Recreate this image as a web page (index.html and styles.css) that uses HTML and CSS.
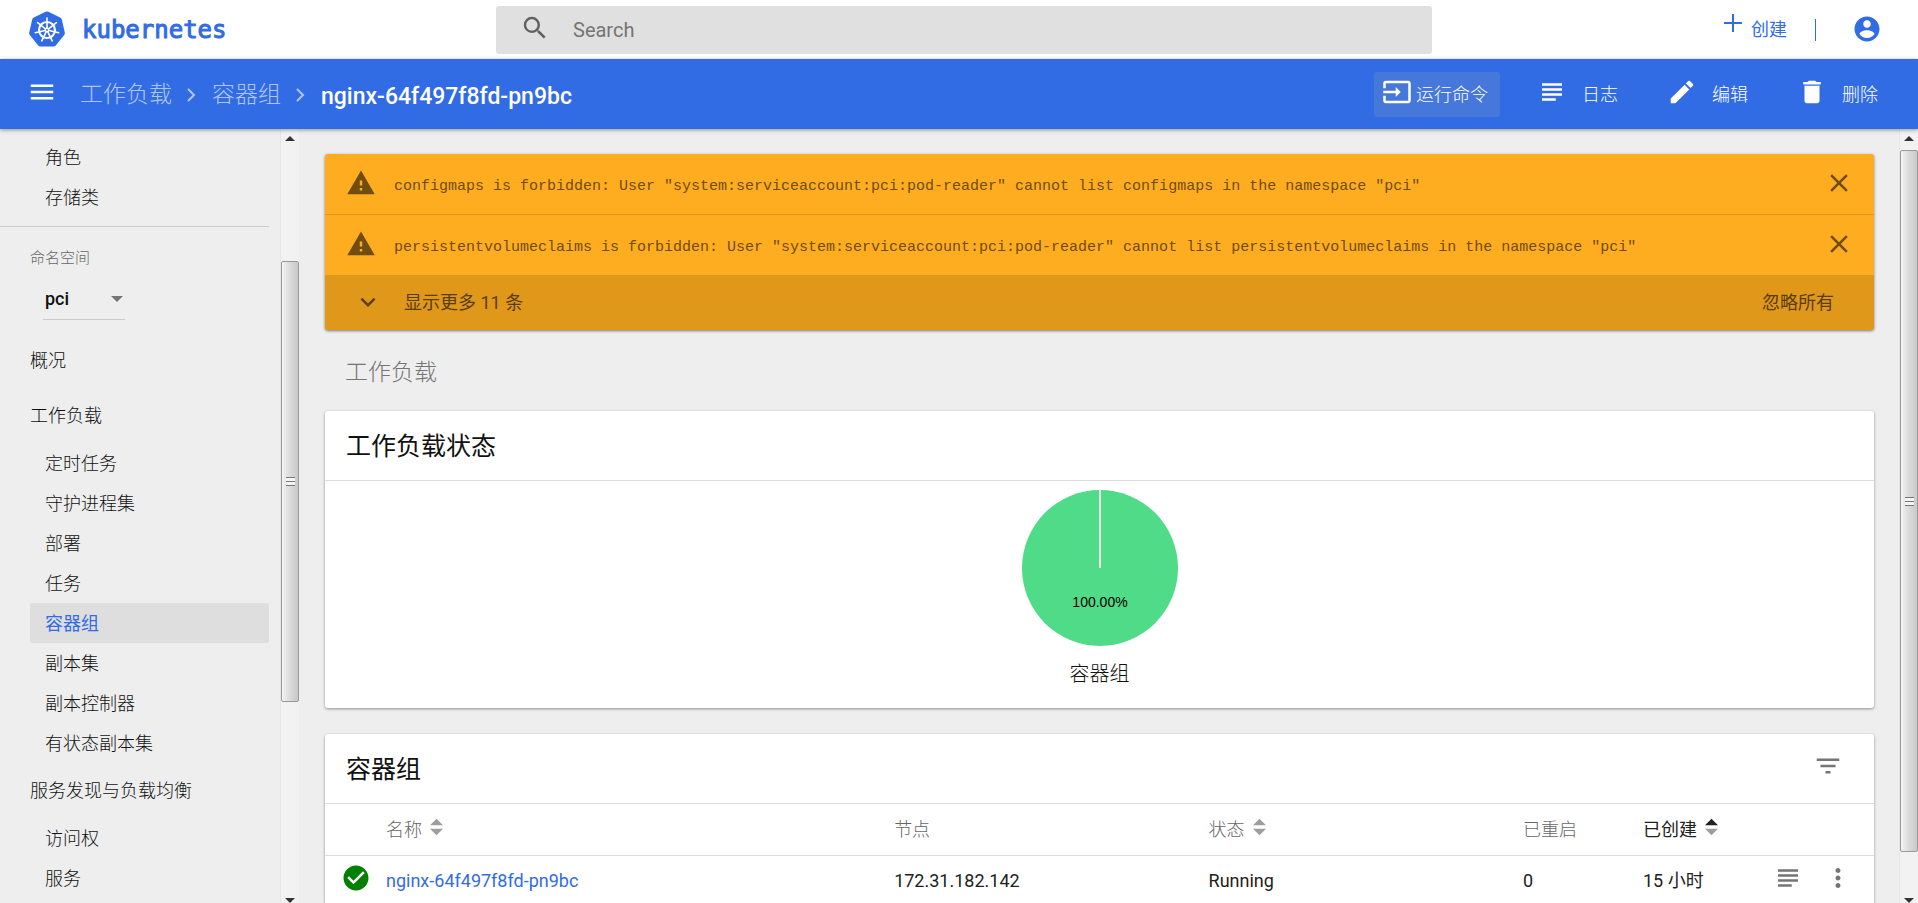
FILE: index.html
```html
<!DOCTYPE html>
<html lang="zh-CN">
<head>
<meta charset="utf-8">
<title>nginx-64f497f8fd-pn9bc - Kubernetes Dashboard</title>
<link rel="stylesheet" href="styles.css">
</head>
<body>
<header class="topbar">
  <a class="brand" href="#">
    <svg class="brand-logo" viewBox="0 0 38 38" aria-hidden="true">
      <path fill="#326ce5" d="M17.6 .8Q19 .1 20.4 .8L32.2 6.4Q33.4 7 33.8 8.400L36.800 21.400Q37.100 22.800 36.200 23.900L28 34.300Q27 35.500 25.500 35.500L12.500 35.500Q11 35.500 10 34.300L1.800 23.900Q.9 22.800 1.200 21.400L4.200 8.400Q4.600 7 5.800 6.400Z"/>
      <g fill="none" stroke="#fff">
        <circle cx="19" cy="19" r="8" stroke-width="2.200"/>
        <g stroke-width="1.600" stroke-linecap="round">
          <path d="M19 17V7"/>
          <path d="M19 17V7" transform="rotate(51.430 19 19)"/>
          <path d="M19 17V7" transform="rotate(102.860 19 19)"/>
          <path d="M19 17V7" transform="rotate(154.290 19 19)"/>
          <path d="M19 17V7" transform="rotate(205.710 19 19)"/>
          <path d="M19 17V7" transform="rotate(257.140 19 19)"/>
          <path d="M19 17V7" transform="rotate(308.570 19 19)"/>
        </g>
      </g>
      <circle cx="19" cy="19" r="2.400" fill="#fff"/>
      <circle cx="19" cy="19" r=".9" fill="#326ce5"/>
    </svg>
    <span>kubernetes</span>
  </a>
  <form class="search" role="search">
    <svg class="icon" viewBox="0 0 24 24" aria-hidden="true"><path d="M15.500 14h-.79l-.28-.27A6.470 6.470 0 0 0 16 9.500 6.500 6.500 0 1 0 9.500 16c1.610 0 3.090-.59 4.230-1.570l.27.28v.79l5 4.990L20.490 19l-4.990-5zm-6 0C7.010 14 5 11.990 5 9.500S7.010 5 9.500 5 14 7.010 14 9.500 11.990 14 9.500 14z"/></svg>
    <input class="search-input" type="text" placeholder="Search" aria-label="Search">
  </form>
  <div class="top-actions">
    <button class="create" type="button">
      <svg class="create-icon" viewBox="0 0 20 20" aria-hidden="true"><path d="M10 1v18M1 10h18" stroke="currentColor" stroke-width="2"/></svg>
      <span>创建</span>
    </button>
    <span class="bar"></span>
    <button class="account" type="button" aria-label="帐户">
      <svg class="icon" viewBox="0 0 24 24" aria-hidden="true"><path d="M12 2C6.480 2 2 6.480 2 12s4.480 10 10 10 10-4.480 10-10S17.520 2 12 2zm0 3c1.660 0 3 1.340 3 3s-1.340 3-3 3-3-1.340-3-3 1.340-3 3-3zm0 14.200a7.200 7.200 0 0 1-6-3.220c.03-1.990 4-3.080 6-3.080 1.990 0 5.970 1.090 6 3.080a7.200 7.200 0 0 1-6 3.220z"/></svg>
    </button>
  </div>
</header>

<div class="toolbar">
  <button class="menu" type="button" aria-label="菜单">
    <svg class="icon" viewBox="0 0 24 24" aria-hidden="true"><path d="M3 18h18v-2H3v2zm0-5h18v-2H3v2zm0-7v2h18V6H3z"/></svg>
  </button>
  <nav class="crumbs" aria-label="路径">
    <a href="#">工作负载</a>
    <svg class="crumb-arrow" viewBox="0 0 12 18" aria-hidden="true"><path d="M2 3l6 6-6 6"/></svg>
    <a href="#">容器组</a>
    <svg class="crumb-arrow" viewBox="0 0 12 18" aria-hidden="true"><path d="M2 3l6 6-6 6"/></svg>
    <span class="crumb-current">nginx-64f497f8fd-pn9bc</span>
  </nav>
  <div class="tools">
    <button class="tool tool-active" type="button">
      <svg class="icon" viewBox="0 0 24 24" aria-hidden="true"><path d="M21 3.010H3c-1.100 0-2 .9-2 2V9h2V4.990h18v14.030H3V15H1v4.010c0 1.100.9 1.980 2 1.980h18c1.100 0 2-.88 2-1.980v-14c0-1.110-.9-2-2-2zM11 16l4-4-4-4v3H1v2h10v3z"/></svg>
      <span>运行命令</span>
    </button>
    <button class="tool" type="button">
      <svg class="icon" viewBox="0 0 24 24" aria-hidden="true"><path d="M15 17H4v2h11v-2zm5-8H4v2h16V9zM4 15h16v-2H4v2zM4 5v2h16V5H4z"/></svg>
      <span>日志</span>
    </button>
    <button class="tool" type="button">
      <svg class="icon" viewBox="0 0 24 24" aria-hidden="true"><path d="M3 17.250V21h3.750L17.810 9.940l-3.750-3.750L3 17.250zM20.710 7.040a1 1 0 0 0 0-1.410l-2.340-2.340a1 1 0 0 0-1.410 0l-1.830 1.830 3.750 3.750 1.830-1.830z"/></svg>
      <span>编辑</span>
    </button>
    <button class="tool" type="button">
      <svg class="icon" viewBox="0 0 24 24" aria-hidden="true"><path d="M6 19c0 1.100.9 2 2 2h8c1.100 0 2-.9 2-2V7H6v12zM19 4h-3.500l-1-1h-5l-1 1H5v2h14V4z"/></svg>
      <span>删除</span>
    </button>
  </div>
</div>

<div class="shell">
  <nav class="sidebar" aria-label="导航">
    <a class="nav-item" href="#">角色</a>
    <a class="nav-item" href="#">存储类</a>
    <hr class="nav-rule">
    <label class="ns-label" for="ns">命名空间</label>
    <div class="ns-box">
      <select class="ns-select" id="ns"><option>pci</option></select>
      <svg class="ns-arrow" viewBox="0 0 12 6" aria-hidden="true"><path d="M0 0h12L6 6z"/></svg>
    </div>
    <a class="nav-group" href="#">概况</a>
    <a class="nav-group" href="#">工作负载</a>
    <a class="nav-item" href="#">定时任务</a>
    <a class="nav-item" href="#">守护进程集</a>
    <a class="nav-item" href="#">部署</a>
    <a class="nav-item" href="#">任务</a>
    <a class="nav-item nav-selected" href="#" aria-current="page">容器组</a>
    <a class="nav-item" href="#">副本集</a>
    <a class="nav-item" href="#">副本控制器</a>
    <a class="nav-item" href="#">有状态副本集</a>
    <a class="nav-group" href="#">服务发现与负载均衡</a>
    <a class="nav-item" href="#">访问权</a>
    <a class="nav-item" href="#">服务</a>
  </nav>
  <div class="scroll scroll-side" aria-hidden="true">
    <svg class="scroll-cap" viewBox="0 0 10 6"><path d="M0 5l5-5 5 5z"/></svg>
    <div class="scroll-before"></div>
    <div class="scroll-thumb"><i class="grip"></i></div>
    <div class="scroll-after"></div>
    <svg class="scroll-cap scroll-cap-end" viewBox="0 0 10 6"><path d="M0 1l5 5 5-5z"/></svg>
  </div>

  <main class="content">
    <section class="alerts" aria-label="警告">
      <div class="alert">
        <svg class="icon" viewBox="0 0 24 24" aria-hidden="true"><path d="M1 21h22L12 2 1 21zm12-3h-2v-2h2v2zm0-4h-2v-4h2v4z"/></svg>
        <p class="alert-text">configmaps is forbidden: User "system:serviceaccount:pci:pod-reader" cannot list configmaps in the namespace "pci"</p>
        <button class="close" type="button" aria-label="关闭"><svg class="icon" viewBox="0 0 24 24" aria-hidden="true"><path d="M19 6.410L17.590 5 12 10.590 6.410 5 5 6.410 10.590 12 5 17.590 6.410 19 12 13.410 17.590 19 19 17.590 13.410 12z"/></svg></button>
      </div>
      <div class="alert">
        <svg class="icon" viewBox="0 0 24 24" aria-hidden="true"><path d="M1 21h22L12 2 1 21zm12-3h-2v-2h2v2zm0-4h-2v-4h2v4z"/></svg>
        <p class="alert-text">persistentvolumeclaims is forbidden: User "system:serviceaccount:pci:pod-reader" cannot list persistentvolumeclaims in the namespace "pci"</p>
        <button class="close" type="button" aria-label="关闭"><svg class="icon" viewBox="0 0 24 24" aria-hidden="true"><path d="M19 6.410L17.590 5 12 10.590 6.410 5 5 6.410 10.590 12 5 17.590 6.410 19 12 13.410 17.590 19 19 17.590 13.410 12z"/></svg></button>
      </div>
      <div class="alert-foot">
        <button class="more" type="button">
          <svg class="icon" viewBox="0 0 24 24" aria-hidden="true"><path d="M7.410 7.840L12 12.420l4.590-4.580L18 9.250l-6 6-6-6z"/></svg>
          <span>显示更多 11 条</span>
        </button>
        <button class="dismiss" type="button">忽略所有</button>
      </div>
    </section>

    <h1 class="page-title">工作负载</h1>

    <section class="card">
      <div class="card-head"><h2 class="card-title">工作负载状态</h2></div>
      <figure class="chart">
        <svg class="pie" viewBox="0 0 160 160" role="img" aria-label="容器组 100.00%">
          <circle cx="80" cy="80" r="78" fill="#4fdb87"/>
          <path d="M80 1v79" stroke="#e6faee" stroke-width="2"/>
          <text class="pie-text" x="80" y="119" text-anchor="middle">100.00%</text>
        </svg>
        <figcaption class="chart-label">容器组</figcaption>
      </figure>
    </section>

    <section class="card card-list">
      <div class="card-head">
        <h2 class="card-title">容器组</h2>
        <button class="filter" type="button" aria-label="筛选"><svg class="icon" viewBox="0 0 24 24" aria-hidden="true"><path d="M10 18h4v-2h-4v2zM3 6v2h18V6H3zm3 7h12v-2H6v2z"/></svg></button>
      </div>
      <table class="pods">
        <colgroup><col class="c-icon"><col><col class="c-wide"><col class="c-wide"><col class="c-restart"><col class="c-age"><col class="c-act"></colgroup>
        <thead>
          <tr>
            <th></th>
            <th>名称<svg class="sort" viewBox="0 0 14 18" aria-hidden="true"><path d="M0 7l7-7 7 7zM0 11l7 7 7-7z"/></svg></th>
            <th>节点</th>
            <th>状态<svg class="sort" viewBox="0 0 14 18" aria-hidden="true"><path d="M0 7l7-7 7 7zM0 11l7 7 7-7z"/></svg></th>
            <th>已重启</th>
            <th class="sorted">已创建<svg class="sort" viewBox="0 0 14 18" aria-hidden="true"><path class="sort-on" d="M0 7l7-7 7 7z"/><path d="M0 11l7 7 7-7z"/></svg></th>
            <th></th>
          </tr>
        </thead>
        <tbody>
          <tr>
            <td class="state"><svg class="icon ok" viewBox="0 0 24 24" role="img" aria-label="正常"><path d="M12 2C6.480 2 2 6.480 2 12s4.480 10 10 10 10-4.480 10-10S17.520 2 12 2zm-2 15l-5-5 1.410-1.410L10 14.170l7.590-7.590L19 8l-9 9z"/></svg></td>
            <td><a class="pod" href="#">nginx-64f497f8fd-pn9bc</a></td>
            <td>172.31.182.142</td>
            <td>Running</td>
            <td>0</td>
            <td>15 小时</td>
            <td>
              <div class="row-actions">
                <button type="button" aria-label="日志"><svg class="icon" viewBox="0 0 24 24" aria-hidden="true"><path d="M15 17H4v2h11v-2zm5-8H4v2h16V9zM4 15h16v-2H4v2zM4 5v2h16V5H4z"/></svg></button>
                <button type="button" aria-label="更多"><svg class="icon" viewBox="0 0 24 24" aria-hidden="true"><path d="M12 8c1.100 0 2-.9 2-2s-.9-2-2-2-2 .9-2 2 .9 2 2 2zm0 2c-1.100 0-2 .9-2 2s.9 2 2 2 2-.9 2-2-.9-2-2-2zm0 6c-1.100 0-2 .9-2 2s.9 2 2 2 2-.9 2-2-.9-2-2-2z"/></svg></button>
              </div>
            </td>
          </tr>
        </tbody>
      </table>
    </section>
  </main>
  <div class="scroll scroll-main" aria-hidden="true">
    <svg class="scroll-cap" viewBox="0 0 10 6"><path d="M0 5l5-5 5 5z"/></svg>
    <div class="scroll-before"></div>
    <div class="scroll-thumb"><i class="grip"></i></div>
    <div class="scroll-after"></div>
    <svg class="scroll-cap scroll-cap-end" viewBox="0 0 10 6"><path d="M0 1l5 5 5-5z"/></svg>
  </div>
</div>
</body>
</html>
```

FILE: styles.css
```css
* { box-sizing: border-box; }

body {
  margin: 0;
  height: 100vh;
  display: flex;
  flex-direction: column;
  overflow: hidden;
  background: #eee;
  color: #111;
  font: 300 18px/24px Roboto, "Noto Sans CJK SC", sans-serif;
}

button {
  border: 0;
  padding: 0;
  background: none;
  color: inherit;
  font: inherit;
  display: flex;
  align-items: center;
}

a { color: inherit; text-decoration: none; }
h1, h2, p, figure { margin: 0; font-weight: 300; }

.icon { width: 30px; height: 30px; fill: currentColor; flex: none; display: block; }

/* Top bar */
.topbar {
  flex: none;
  height: 59px;
  display: flex;
  align-items: center;
  padding: 0 36px 0 28px;
  background: #fff;
  color: #326ce5;
}
.brand {
  flex: 468 1 0;
  display: flex;
  align-items: center;
  gap: 16px;
  font: 400 24px/28px "DejaVu Sans Mono", monospace;
  -webkit-text-stroke: 1px #326ce5;
}
.brand-logo { width: 38px; height: 38px; }
.search {
  flex: 888 1 0;
  height: 48px;
  display: flex;
  align-items: center;
  gap: 23px;
  padding: 0 24px;
  background: #e0e0e0;
  border-radius: 3px;
  color: #616161;
}
.search .icon { margin-bottom: 4px; }
.search-input {
  flex: 1;
  border: 0;
  padding: 0;
  outline: 0;
  background: none;
  color: #424242;
  font: 400 20px/24px Roboto, sans-serif;
}
.search-input::placeholder { color: #757575; opacity: 1; }
.top-actions {
  flex: 450 1 0;
  display: flex;
  align-items: center;
  justify-content: flex-end;
  height: 56px;
}
.create { gap: 8px; font-weight: 400; }
.create-icon { width: 20px; height: 20px; margin-bottom: 14px; }
.account { margin-bottom: 2px; }
.bar { width: 1px; height: 22px; margin: 0 36px 0 28px; background: #326ce5; }

/* Blue toolbar */
.toolbar {
  flex: none;
  height: 70px;
  display: flex;
  align-items: center;
  padding: 1px 40px 0 27px;
  background: #326ce5;
  color: #fff;
  box-shadow: 0 1px 4px rgba(0, 0, 0, .4);
  z-index: 1;
}
.menu { margin-right: 23px; padding-bottom: 5px; }
.crumbs {
  flex: 1;
  display: flex;
  align-items: center;
  font-size: 23px;
  line-height: 30px;
}
.crumbs a { color: #b0c6f6; }
.crumb-arrow {
  width: 12px;
  height: 18px;
  margin: 0 14px;
  fill: none;
  stroke: #b0c6f6;
  stroke-width: 2;
}
.crumb-current { padding-top: 4px; font-weight: 500; }
.tools { display: flex; align-items: center; gap: 49px; }
.tool { gap: 15px; height: 45px; padding-top: 1px; }
.tool .icon { margin-bottom: 6px; }
.tool-active {
  gap: 4px;
  padding: 1px 12px 0 8px;
  margin-right: -12px;
  background: #4678dc;
  border-radius: 3px;
}

/* Body */
.shell { flex: 1; min-height: 0; display: flex; }

.sidebar {
  flex: none;
  width: 280px;
  padding: 8px 11px 0 0;
  overflow: hidden;
  display: flex;
  flex-direction: column;
}
.nav-item, .nav-group { flex: none; display: flex; align-items: center; margin-left: 30px; }
.nav-item { height: 40px; padding: 1px 0 0 15px; }
.nav-group { height: 55px; }
.nav-selected { background: #dedede; color: #326ce5; border-radius: 2px; font-weight: 400; }
.nav-rule { flex: none; width: 100%; margin: 9px 0 19px; border: 0; border-top: 1px solid #ccc; }
.ns-label { margin-left: 30px; color: #666; font-size: 15px; line-height: 24px; }
.ns-box {
  flex: none;
  display: flex;
  align-items: center;
  width: 82px;
  height: 42px;
  margin: 8px 0 13px 43px;
  border-bottom: 1px solid #ccc;
}
.ns-select {
  flex: 1;
  min-width: 0;
  appearance: none;
  border: 0;
  padding: 0 2px;
  background: none;
  color: inherit;
  font: 500 18px/24px Roboto, sans-serif;
}
.ns-arrow { width: 12px; height: 6px; margin-right: 2px; fill: #757575; }

/* Scroll bars */
.scroll {
  flex: none;
  width: 19px;
  display: flex;
  flex-direction: column;
  align-items: center;
  background: #f2f2f2;
  border-left: 1px solid #e6e6e6;
}
.scroll-cap { flex: none; width: 10px; height: 6px; margin: 7px 0; fill: #333; }
.scroll-cap-end { margin: 14px 0 0; }
.scroll-thumb {
  width: 100%;
  display: flex;
  align-items: center;
  justify-content: center;
  border: 1px solid #999;
  border-radius: 2px;
  background: linear-gradient(90deg, #f4f4f4, #dcdcdc 45%, #c8c8c8);
}
.grip { width: 9px; height: 9px; background: repeating-linear-gradient(#777 0 1px, #f4f4f4 1px 4px); }
.scroll-side .scroll-before { flex: 112; }
.scroll-side .scroll-thumb { flex: 441; }
.scroll-side .scroll-after { flex: 181; }
.scroll-main .scroll-before { flex: 1; }
.scroll-main .scroll-thumb { flex: 702; }
.scroll-main .scroll-after { flex: 31; }

/* Content */
.content { flex: 1; min-width: 0; padding: 25px 25px 0 26px; overflow: hidden; }

.alerts {
  border-radius: 3px;
  overflow: hidden;
  background: #ffad20;
  color: #704c0e;
  box-shadow: 0 1px 3px rgba(0, 0, 0, .5);
}
.alert {
  display: flex;
  align-items: center;
  height: 61px;
  padding: 0 20px 0 21px;
  border-bottom: 1px solid #e0981b;
}
.alert .icon { margin-bottom: 2px; }
.alert-text {
  flex: 1;
  margin-left: 18px;
  padding-top: 5px;
  font: 400 15px/20px "Liberation Mono", monospace;
}
.alert-foot {
  display: flex;
  align-items: center;
  justify-content: space-between;
  height: 54px;
  padding: 0 40px 0 28px;
  background: #e0981b;
  color: #5a3d0b;
  font-weight: 400;
}
.more { gap: 21px; }

.page-title {
  padding: 28px 0 23px 20px;
  color: #757575;
  font-size: 23px;
  line-height: 30px;
}

.card { background: #fff; border-radius: 3px; box-shadow: 0 1px 3px rgba(0, 0, 0, .4); }
.card-list { margin-top: 26px; }
.card-head {
  display: flex;
  align-items: center;
  justify-content: space-between;
  height: 70px;
  padding: 2px 31px 0 21px;
  border-bottom: 1px solid #dcdcdc;
}
.card-title { font-size: 25px; line-height: 32px; font-weight: 400; }
.filter { color: #757575; padding-bottom: 8px; }
.chart { display: flex; flex-direction: column; align-items: center; padding: 7px 0 20px; }
.pie { width: 160px; height: 160px; }
.pie-text { font: 400 14px "Liberation Sans", Arial, sans-serif; fill: #000; }
.chart-label { margin-top: 12px; font-size: 20px; line-height: 28px; }

.pods { width: 100%; table-layout: fixed; border-collapse: collapse; }
.c-icon { width: 61px; }
.c-wide { width: 20.3%; }
.c-restart { width: 120px; }
.c-age { width: 130px; }
.c-act { width: 101px; }
.pods th, .pods td { padding: 2px 0 0; text-align: left; white-space: nowrap; }
.pods th { height: 51px; color: #666; font-weight: 300; }
.pods thead tr { border-bottom: 1px solid #dcdcdc; }
.pods td { height: 50px; color: #212121; font-weight: 400; }
.pods .sorted { color: #212121; font-weight: 400; }
.sort { width: 13px; height: 18px; margin-left: 8px; fill: #9e9e9e; }
.sort-on { fill: #212121; }
.state { line-height: 0; }
.ok { margin: 0 0 6px 16px; color: #008000; }
.pod { color: #326ce5; }
.row-actions { display: flex; gap: 20px; margin-bottom: 6px; color: #757575; }
```
